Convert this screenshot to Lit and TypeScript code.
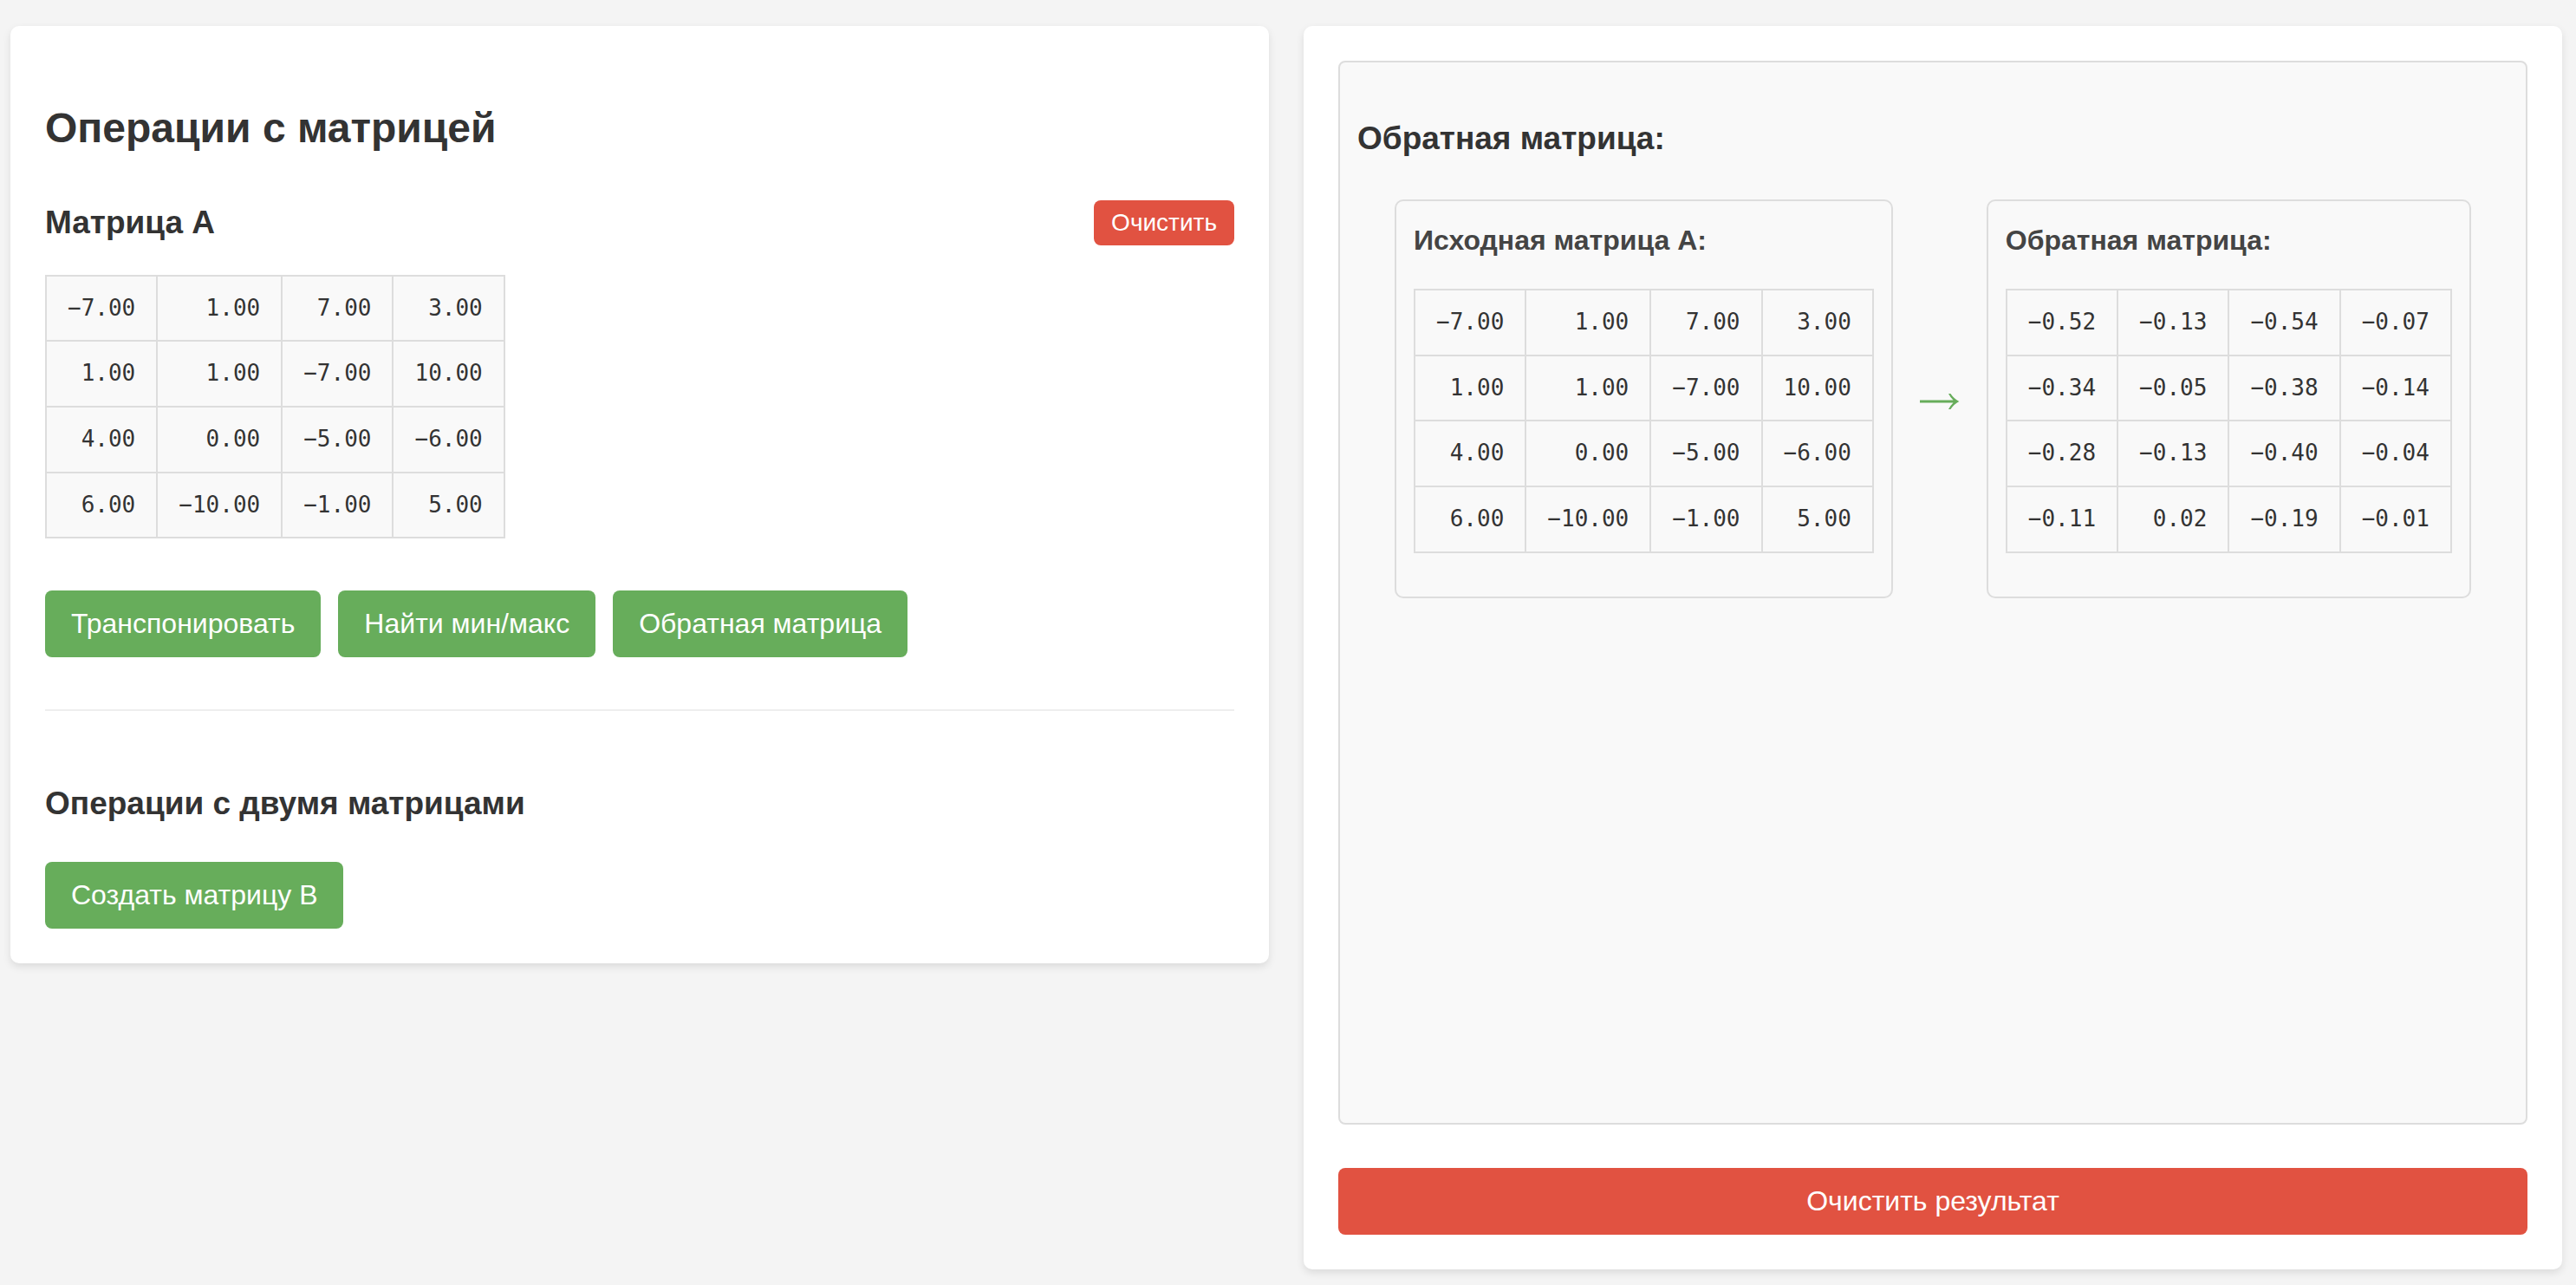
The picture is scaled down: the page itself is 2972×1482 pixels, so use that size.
import { LitElement, html, css } from "lit";
import { customElement, property, state } from "lit/decorators.js";

type Matrix = number[][];

const MATRIX_A: Matrix = [
  [-7, 1, 7, 3],
  [1, 1, -7, 10],
  [4, 0, -5, -6],
  [6, -10, -1, 5],
];

const INVERSE: Matrix = [
  [-0.52, -0.13, -0.54, -0.07],
  [-0.34, -0.05, -0.38, -0.14],
  [-0.28, -0.13, -0.4, -0.04],
  [-0.11, 0.02, -0.19, -0.01],
];

const formatNumber = (n: number) => n.toFixed(2).replace("-", "\u2212");

@customElement("matrix-table")
export class MatrixTable extends LitElement {
  static styles = css`
    :host {
      display: block;
    }
    .matrix {
      border-collapse: collapse;
      background: #f9f9f9;
    }
    .cell {
      padding: 16px 24px;
      border: 2px solid #ddd;
      font-family: "DejaVu Sans Mono", "Liberation Mono", monospace;
      font-size: 26px;
      line-height: 1.6;
      text-align: right;
      white-space: nowrap;
    }
  `;

  @property({ attribute: false }) values: Matrix = [];
  @property() label = "";

  render() {
    return html`
      <table class="matrix" aria-label=${this.label}>
        <tbody>
          ${this.values.map(
            (row) => html`<tr>${row.map((n) => html`<td class="cell">${formatNumber(n)}</td>`)}</tr>`
          )}
        </tbody>
      </table>
    `;
  }
}

@customElement("app-root")
export class AppRoot extends LitElement {
  static styles = css`
    :host {
      display: block;
      font-family: "Liberation Sans", Arial, sans-serif;
      font-size: 32px;
      line-height: 1.6;
      color: #333;
    }
    .page {
      box-sizing: border-box;
      display: flex;
      gap: 40px;
      min-height: 100vh;
      padding: 30px 16px 18px 12px;
      background: #f4f4f4;
    }
    .panel {
      box-sizing: border-box;
      flex: 1 1 0;
      min-width: 0;
      padding: 40px;
      border-radius: 10px;
      background: #fff;
      box-shadow: 0 4px 10px rgba(0, 0, 0, 0.1);
    }
    .operations {
      align-self: flex-start;
    }
    .output {
      display: flex;
      flex-direction: column;
      gap: 50px;
    }
    .title {
      margin: 40px 0;
      font-size: 48px;
    }
    .subtitle {
      margin: 0;
      font-size: 37px;
      line-height: 60px;
    }
    .matrix-header {
      display: flex;
      align-items: center;
      justify-content: space-between;
      margin-bottom: 30px;
    }
    .actions {
      display: flex;
      flex-wrap: wrap;
      gap: 20px;
      margin-top: 60px;
    }
    .pair {
      margin-top: 60px;
      padding-top: 77px;
      border-top: 2px solid #eee;
    }
    .pair .subtitle {
      margin-bottom: 37px;
    }
    .result .subtitle {
      margin-bottom: 40px;
    }
    .button {
      padding: 20px 30px;
      border: 0;
      border-radius: 8px;
      background: #67ad5b;
      color: #fff;
      font-family: inherit;
      font-size: 32px;
      line-height: 37px;
      cursor: pointer;
    }
    .danger {
      background: #e15241;
    }
    .small {
      padding: 10px 20px;
      font-size: 28px;
      line-height: 32px;
    }
    .result {
      flex: 1;
      padding: 58px 20px 20px;
      border: 2px solid #ddd;
      border-radius: 8px;
      background: #f9f9f9;
    }
    .comparison {
      display: flex;
      align-items: center;
      justify-content: center;
      gap: 30px;
    }
    .card {
      padding: 20px 20px 50px;
      border: 2px solid #ddd;
      border-radius: 10px;
    }
    .card-title {
      margin: 0 0 30px;
      font-size: 32px;
      color: #444;
    }
    .arrow {
      display: block;
      width: 48px;
      height: 48px;
      color: #67ad5b;
    }
  `;

  @state() private hasMatrix = true;
  @state() private hasResult = true;

  private clearMatrix() {
    this.hasMatrix = false;
  }

  private clearResult() {
    this.hasResult = false;
  }

  private showInverse() {
    this.hasResult = true;
  }

  private renderResult() {
    return html`
      <h3 class="subtitle">Обратная матрица:</h3>
      <div class="comparison">
        <div class="card">
          <h4 class="card-title">Исходная матрица A:</h4>
          <matrix-table .values=${MATRIX_A} label="Исходная матрица A"></matrix-table>
        </div>
        <svg class="arrow" viewBox="0 0 48 48" fill="currentColor" aria-hidden="true">
          <path d="M1 25.5H39.5Q36 22 34 18H36.4Q40.5 24 46.3 27Q40.5 30 36.4 36H34Q36 32 39.5 28.5H1Z" />
        </svg>
        <div class="card">
          <h4 class="card-title">Обратная матрица:</h4>
          <matrix-table .values=${INVERSE} label="Обратная матрица"></matrix-table>
        </div>
      </div>
    `;
  }

  render() {
    return html`
      <main class="page">
        <section class="panel operations">
          <h2 class="title">Операции с матрицей</h2>
          <div class="matrix-header">
            <h3 class="subtitle">Матрица A</h3>
            <button class="button danger small" type="button" @click=${this.clearMatrix}>Очистить</button>
          </div>
          ${this.hasMatrix
            ? html`<matrix-table .values=${MATRIX_A} label="Матрица A"></matrix-table>`
            : null}
          <div class="actions">
            <button class="button" type="button">Транспонировать</button>
            <button class="button" type="button">Найти мин/макс</button>
            <button class="button" type="button" @click=${this.showInverse}>Обратная матрица</button>
          </div>
          <div class="pair">
            <h3 class="subtitle">Операции с двумя матрицами</h3>
            <button class="button" type="button">Создать матрицу B</button>
          </div>
        </section>
        <section class="panel output">
          <div class="result">${this.hasResult ? this.renderResult() : null}</div>
          <button class="button danger" type="button" @click=${this.clearResult}>Очистить результат</button>
        </section>
      </main>
    `;
  }
}
